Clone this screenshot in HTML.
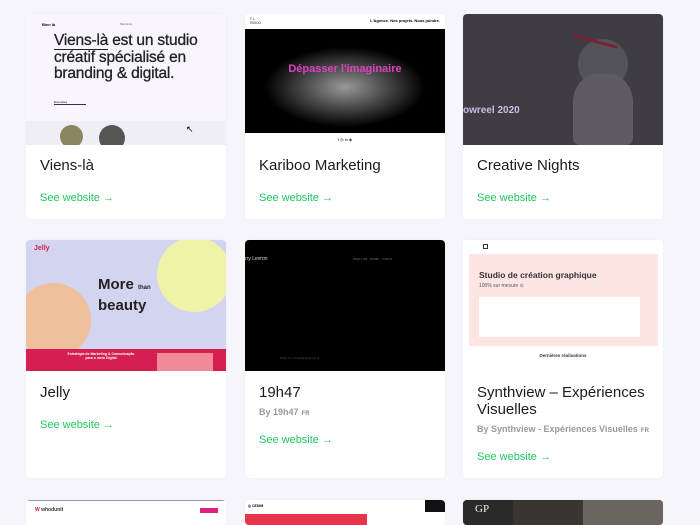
<!DOCTYPE html><html><head><meta charset="utf-8"><style>
*{box-sizing:border-box;margin:0;padding:0}
html,body{width:700px;height:525px;overflow:hidden}
body{background:#f5f5fb;font-family:"Liberation Sans",sans-serif;position:relative}
.card{position:absolute;width:200px;background:#fff;border-radius:4px;overflow:hidden;box-shadow:0 0 2px rgba(0,0,0,.04)}
.img{position:absolute;left:0;top:0;width:200px;height:131px;overflow:hidden}
.t{position:absolute;left:14px;font-size:15px;color:#1a1a22;line-height:17px}
.by{position:absolute;left:14px;font-size:9px;color:#999;font-weight:bold}
.by small{font-size:6px;color:#888;margin-left:3px}
.sw{position:absolute;left:14px;font-size:11px;color:#22c55e}
</style></head><body>

<div class="card" style="left:26px;top:14px;height:205px">
 <div class="img" style="background:#f8f6fc">
  <div style="position:absolute;left:16px;top:8px;font-size:4px;font-weight:bold">Bien là</div>
  <div style="position:absolute;left:94px;top:8px;font-size:3px;color:#666">Mentions</div>
  <div style="position:absolute;left:28px;top:19px;font-size:15.5px;line-height:16.5px;color:#222;letter-spacing:-.2px;-webkit-text-stroke:.3px #222">
   <span style="border-bottom:1px solid #222">Viens-là</span> est un studio<br>créatif spécialisé en<br>branding &amp; digital.</div>
  <div style="position:absolute;left:28px;top:86px;width:32px;border-bottom:1px solid #333;font-size:3px">Exemples</div>
  <div style="position:absolute;left:0;top:107px;width:200px;height:24px;background:#f0eef5"></div>
  <div style="position:absolute;left:34px;top:111px;width:23px;height:23px;border-radius:50%;background:#8a8560"></div>
  <div style="position:absolute;left:73px;top:111px;width:26px;height:26px;border-radius:50%;background:#555"></div>
  <div style="position:absolute;left:160px;top:110px;font-size:9px">↖</div>
 </div>
 <div class="t" style="top:143px">Viens-là</div>
 <div class="sw" style="top:178px">See website →</div>
</div>

<div class="card" style="left:245px;top:14px;height:205px">
 <div class="img" style="background:#fff">
  <div style="position:absolute;left:5px;top:3px;font-size:3.5px;line-height:4px;color:#333">F.L<br>RIBOO</div>
  <div style="position:absolute;right:5px;top:4px;font-size:4px;font-weight:bold">L'Agence. Nos projets. Nous joindre.</div>
  <div style="position:absolute;left:0;top:15px;width:200px;height:104px;background:radial-gradient(ellipse 80px 40px at 100px 58px,#999,#444 55%,#000 100%)"></div>
  <div style="position:absolute;left:0;top:49px;width:200px;text-align:center;font-size:11px;font-weight:bold;color:#e040c0">Dépasser l'imaginaire</div>
  <div style="position:absolute;left:0;top:123px;width:200px;text-align:center;font-size:4px">f ◎ in ◈</div>
 </div>
 <div class="t" style="top:143px">Kariboo Marketing</div>
 <div class="sw" style="top:178px">See website →</div>
</div>

<div class="card" style="left:463px;top:14px;height:205px">
 <div class="img" style="background:#3f3d43">
  <div style="position:absolute;left:115px;top:25px;width:50px;height:50px;border-radius:50%;background:#55535a"></div>
  <div style="position:absolute;left:110px;top:60px;width:60px;height:71px;background:#5e5c62;border-radius:40% 40% 10% 10%"></div>
  <div style="position:absolute;left:110px;top:26px;width:45px;height:3px;background:#7a2035;transform:rotate(15deg)"></div>
  <div style="position:absolute;left:0;top:91px;font-size:10px;font-weight:bold;color:#c8bfe8">owreel 2020</div>
 </div>
 <div class="t" style="top:143px">Creative Nights</div>
 <div class="sw" style="top:178px">See website →</div>
</div>

<div class="card" style="left:26px;top:240px;height:238px">
 <div class="img" style="background:#d3d4f0">
  <div style="position:absolute;left:-10px;top:43px;width:75px;height:75px;border-radius:50%;background:#efc09c"></div>
  <div style="position:absolute;left:131px;top:-3px;width:75px;height:75px;border-radius:50%;background:#eef3a8"></div>
  <div style="position:absolute;left:8px;top:5px;font-size:7px;font-weight:bold;color:#d0204a">Jelly</div>
  <div style="position:absolute;left:72px;top:36px;font-size:15px;line-height:17px;font-weight:bold;color:#222">More <span style="font-size:6px">than</span><br>beauty</div>
  <div style="position:absolute;left:0;top:109px;width:200px;height:22px;background:#d41f50"></div>
  <div style="position:absolute;left:40px;top:112px;width:70px;text-align:center;font-size:3.5px;color:#fff;font-weight:bold">Estratégia de Marketing &amp; Comunicação para o meio Digital</div>
  <div style="position:absolute;left:131px;top:113px;width:56px;height:18px;background:#f08a98"></div>
 </div>
 <div class="t" style="top:144px">Jelly</div>
 <div class="sw" style="top:179px">See website →</div>
</div>

<div class="card" style="left:245px;top:240px;height:238px">
 <div class="img" style="background:#000">
  <div style="position:absolute;left:0;top:16px;font-size:5px;color:#ddd">rry Levron</div>
  <div style="position:absolute;left:108px;top:17px;font-size:3px;color:#777">WHO I AM · WORK · TOOLS</div>
  <div style="position:absolute;left:35px;top:116px;font-size:3px;color:#555">What I'm currently listening to</div>
 </div>
 <div class="t" style="top:144px">19h47</div>
 <div class="by" style="top:167px">By 19h47<small>FR</small></div>
 <div class="sw" style="top:194px">See website →</div>
</div>

<div class="card" style="left:463px;top:240px;height:238px">
 <div class="img" style="background:#fff">
  <div style="position:absolute;left:20px;top:4px;width:5px;height:5px;border:1px solid #333"></div>
  <div style="position:absolute;left:6px;top:14px;width:189px;height:92px;background:#fde5e4"></div>
  <div style="position:absolute;left:16px;top:30px;font-size:8.5px;font-weight:bold;color:#333">Studio de création graphique</div>
  <div style="position:absolute;left:16px;top:43px;font-size:5px;color:#555">100% sur mesure ⊙</div>
  <div style="position:absolute;left:16px;top:57px;width:161px;height:40px;background:#fff"></div>
  <div style="position:absolute;left:0;top:113px;width:200px;text-align:center;font-size:4.5px;font-weight:bold;color:#333">Dernières réalisations</div>
 </div>
 <div class="t" style="top:144px">Synthview – Expériences<br>Visuelles</div>
 <div class="by" style="top:184px">By Synthview - Expériences Visuelles<small>FR</small></div>
 <div class="sw" style="top:211px">See website →</div>
</div>

<div class="card" style="left:26px;top:500px;height:25px">
 <div class="img" style="background:#fff;border-top:1px solid #99a">
  <div style="position:absolute;left:9px;top:6px;font-size:5px;font-weight:bold;color:#c0185a">W <span style="color:#333">whodunit</span></div>
  <div style="position:absolute;left:174px;top:7px;width:18px;height:5px;background:#e0207a"></div>
 </div>
</div>
<div class="card" style="left:245px;top:500px;height:25px">
 <div class="img" style="background:#fff">
  <div style="position:absolute;left:3px;top:4px;font-size:3.5px;font-weight:bold">◎ CEDIM</div>
  <div style="position:absolute;left:180px;top:0;width:20px;height:12px;background:#111"></div>
  <div style="position:absolute;left:0;top:14px;width:122px;height:20px;background:#e8344a"></div>
 </div>
</div>
<div class="card" style="left:463px;top:500px;height:25px">
 <div class="img" style="background:#3a3530">
  <div style="position:absolute;left:0;top:0;width:50px;height:30px;background:#2a2a2a;color:#eee;font-family:'Liberation Serif',serif;font-size:11px;padding:3px 0 0 12px">GP</div>
  <div style="position:absolute;left:120px;top:0;width:80px;height:30px;background:#6b6560"></div>
 </div>
</div>
</body></html>
